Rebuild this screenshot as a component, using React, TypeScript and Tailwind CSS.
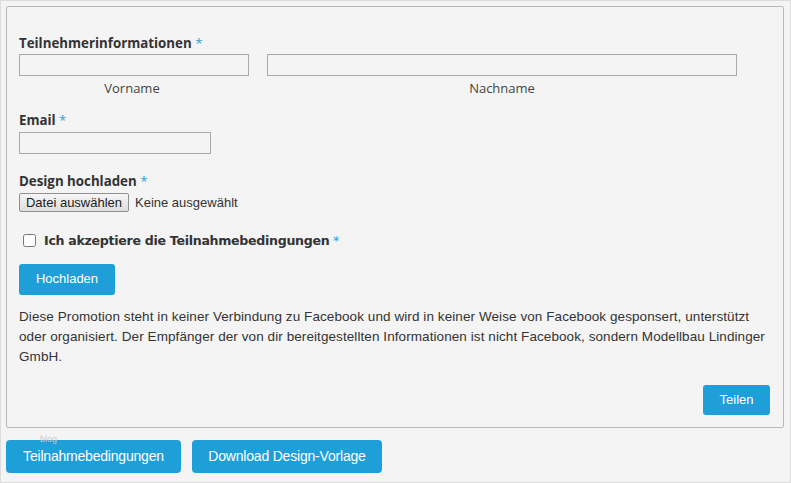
import { useState } from 'react';

const Star = () => <span className="text-[#2ea3d8] font-normal"> *</span>;

export default function App() {
  const [vorname, setVorname] = useState('');
  const [nachname, setNachname] = useState('');
  const [email, setEmail] = useState('');
  const [accepted, setAccepted] = useState(false);

  return (
    <div className="w-[791px] h-[483px] bg-[#f4f4f4] border border-[#dcdcdc] font-['Open_Sans',sans-serif] text-[#333] overflow-hidden">
      <div className="px-[5px] pt-[5px]">
        {/* Formular */}
        <div className="h-[422px] w-[778px] border border-[#b9b9b9] rounded-[2px] pl-[12px] pr-[12px] pt-[27px]">
          <div className="text-[13.3px] font-bold leading-[18px]">
            Teilnehmerinformationen<Star />
          </div>
          <div className="flex gap-[18px] mt-[2px]">
            <div className="flex flex-col">
              <input
                value={vorname}
                onChange={(e) => setVorname(e.target.value)}
                className="w-[230px] h-[22px] border border-[#a9a9a9] bg-[#f4f4f4] outline-none px-1 text-[13px]"
              />
              <span className="text-center text-[13px] text-[#444] leading-[18px] mt-[3px] pr-[4px]">Vorname</span>
            </div>
            <div className="flex flex-col">
              <input
                value={nachname}
                onChange={(e) => setNachname(e.target.value)}
                className="w-[470px] h-[22px] border border-[#a9a9a9] bg-[#f4f4f4] outline-none px-1 text-[13px]"
              />
              <span className="text-center text-[13px] text-[#444] leading-[18px] mt-[3px]">Nachname</span>
            </div>
          </div>

          <div className="text-[13.3px] font-bold leading-[18px] mt-[14px]">
            Email<Star />
          </div>
          <input
            value={email}
            onChange={(e) => setEmail(e.target.value)}
            className="block w-[192px] h-[22px] border border-[#a9a9a9] bg-[#f4f4f4] outline-none px-1 text-[13px] mt-[3px]"
          />

          <div className="text-[13.3px] font-bold leading-[18px] mt-[18px]">
            Design hochladen<Star />
          </div>
          <div className="flex items-center gap-[6px] mt-[3px] font-['Liberation_Sans',sans-serif] text-[13px]">
            <button className="h-[19px] w-[110px] border border-[#8f8f8f] rounded-[2px] bg-gradient-to-b from-[#f6f6f6] to-[#dedede] text-[#222] leading-none">
              Datei auswählen
            </button>
            <span className="text-[#333]">Keine ausgewählt</span>
          </div>

          <label className="flex items-center gap-[8px] mt-[19px] ml-[4px] font-bold leading-[18px] font-['DejaVu_Sans',sans-serif] tracking-[-0.3px]">
            <input
              type="checkbox"
              checked={accepted}
              onChange={(e) => setAccepted(e.target.checked)}
              className="w-[13px] h-[13px] m-0 accent-[#1e9fd8]"
            />
            <span className="text-[#333] text-[12.6px]">
              Ich akzeptiere die Teilnahmebedingungen<Star />
            </span>
          </label>

          <button className="mt-[14px] h-[31px] w-[96px] rounded-[3px] bg-[#1e9fd8] text-white text-[13px] font-['Liberation_Sans',sans-serif]">
            Hochladen
          </button>

          <p className="mt-[12px] text-[13.5px] tracking-[0.08px] leading-[20px] text-[#333] font-['Liberation_Sans',sans-serif]">
            Diese Promotion steht in keiner Verbindung zu Facebook und wird in keiner Weise von Facebook gesponsert, unterstützt
            oder organisiert. Der Empfänger der von dir bereitgestellten Informationen ist nicht Facebook, sondern Modellbau Lindinger
            GmbH.
          </p>

          <div className="flex justify-end mt-[18px] pr-[1px]">
            <button className="h-[30px] w-[67px] rounded-[3px] bg-[#1e9fd8] text-white text-[13px] font-['Liberation_Sans',sans-serif]">
              Teilen
            </button>
          </div>
        </div>

        {/* Links unten */}
        <div className="relative flex gap-[11px] mt-[12px]">
          <span className="absolute left-[34px] -top-[7px] text-[9px] text-[#c8c8c8] font-['Liberation_Sans',sans-serif]">blog</span>
          <button className="h-[33px] w-[175px] rounded-[4px] bg-[#1e9fd8] text-white text-[14px] font-['Liberation_Sans',sans-serif] tracking-[-0.2px]">
            Teilnahmebedingungen
          </button>
          <button className="h-[33px] w-[190px] rounded-[4px] bg-[#1e9fd8] text-white text-[14px] font-['Liberation_Sans',sans-serif] tracking-[-0.2px]">
            Download Design-Vorlage
          </button>
        </div>
      </div>
    </div>
  );
}
